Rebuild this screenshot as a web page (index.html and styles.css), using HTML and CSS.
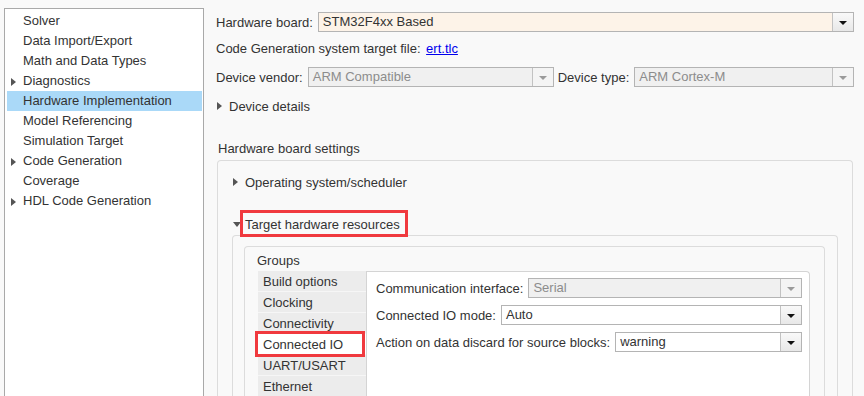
FILE: index.html
```html
<!DOCTYPE html>
<html lang="en">
<head>
    <meta charset="UTF-8">
    <meta name="viewport" content="width=device-width, initial-scale=1.0">
    <link rel="stylesheet" href="styles.css">
    <title>Configuration Parameters</title>
</head>
<body>
    <div class="main-container">

        <div class="nav">
            <ul class="nav-list">
                <li>Solver</li>
                <li>Data Import/Export</li>
                <li>Math and Data Types</li>
                <li class="collapsed">Diagnostics</li>
                <li class="active">Hardware Implementation</li>
                <li>Model Referencing</li>
                <li>Simulation Target</li>
                <li class="collapsed">Code Generation</li>
                <li>Coverage</li>
                <li class="collapsed">HDL Code Generation</li>
            </ul>
        </div>

        <div class="config">
            <div class="row">
                <span class="label">Hardware board:</span>
                <div class="select board">
                    <span class="value">STM32F4xx Based</span>
                    <span class="btn"></span>
                </div>
            </div>
            <div class="row row-gap-small">
                <span class="label">Code Generation system target file: <a href="#" class="link">ert.tlc</a></span>
            </div>
            <div class="row row-gap">
                <span class="label">Device vendor:</span>
                <div class="select disabled vendor">
                    <span class="value">ARM Compatible</span>
                    <span class="btn"></span>
                </div>
                <span class="label label-type">Device type:</span>
                <div class="select disabled">
                    <span class="value">ARM Cortex-M</span>
                    <span class="btn"></span>
                </div>
            </div>
            <div class="row row-gap toggle collapsed">Device details</div>

            <div class="section-title">Hardware board settings</div>
            <div class="panel board-settings">
                <div class="row toggle collapsed first-toggle">Operating system/scheduler</div>
                <div class="row toggle expanded second-toggle"><span class="marked">Target hardware resources</span></div>

                <div class="panel resources">
                    <div class="panel groups-box">
                        <div class="groups-title">Groups</div>
                        <div class="groups">
                            <ul class="group-list">
                                <li>Build options</li>
                                <li>Clocking</li>
                                <li>Connectivity</li>
                                <li class="selected"><span class="marked-item">Connected IO</span></li>
                                <li>UART/USART</li>
                                <li>Ethernet</li>
                            </ul>
                            <div class="group-pane">
                                <div class="pane-row">
                                    <span class="label">Communication interface:</span>
                                    <div class="select disabled">
                                        <span class="value">Serial</span>
                                        <span class="btn"></span>
                                    </div>
                                </div>
                                <div class="pane-row">
                                    <span class="label">Connected IO mode:</span>
                                    <div class="select white">
                                        <span class="value">Auto</span>
                                        <span class="btn"></span>
                                    </div>
                                </div>
                                <div class="pane-row">
                                    <span class="label">Action on data discard for source blocks:</span>
                                    <div class="select white">
                                        <span class="value">warning</span>
                                        <span class="btn"></span>
                                    </div>
                                </div>
                            </div>
                        </div>
                    </div>
                </div>
            </div>
        </div>

    </div>
</body>
</html>
```

FILE: styles.css
```css
*{
    margin:0px;
    padding:0px;
    box-sizing: border-box;
}
html, body{
    height: 100%;
    overflow: hidden;
}
body{
    background-color: #f9f9f9;
    font-family: "Liberation Sans", Arial, sans-serif;
    font-size: 13px;
    color: #333;
}
.main-container{
    display: flex;
    flex-direction: row;
    align-items: flex-start;
}

/* left tree */
.nav{
    width: 200px;
    height: 388px;
    margin-top: 8px;
    margin-left: 4px;
    border: 1px solid #a9a9a9;
    border-bottom: none;
    background-color: #fff;
    padding: 2px 1px 0 2px;
}
.nav-list{
    list-style: none;
}
.nav-list li{
    height: 20px;
    line-height: 20px;
    padding-left: 16px;
    white-space: nowrap;
}
.nav-list li.active{
    background-color: #aad9f8;
}
.nav-list li.collapsed::before{
    content: "";
    display: inline-block;
    margin-left: -12px;
    margin-right: 7px;
    border-top: 4px solid transparent;
    border-bottom: 4px solid transparent;
    border-left: 5px solid #555;
    vertical-align: -1px;
}

/* right side */
.config{
    flex: 1;
    margin-left: 12px;
    margin-right: 10px;
    padding-top: 12px;
}
.row{
    display: flex;
    align-items: center;
    height: 20px;
    white-space: nowrap;
}
.row-gap-small{
    margin-top: 6px;
}
.row-gap{
    margin-top: 9px;
}
.label{
    margin-right: 5px;
    white-space: nowrap;
}
.label-type{
    margin-left: 4px;
}
.link{
    color: #0000ee;
    text-decoration: underline;
    margin-left: 2px;
}

.select{
    flex: 1;
    display: flex;
    height: 20px;
    border: 1px solid #b4b4b4;
    background-color: #fff;
}
.select .value{
    flex: 1;
    line-height: 18px;
    padding-left: 4px;
    overflow: hidden;
}
.select .btn{
    width: 21px;
    border-left: 1px solid #c2c2c2;
    background: linear-gradient(#f9f9f9, #e8e8e8);
    display: flex;
    align-items: center;
    justify-content: center;
}
.select .btn::after{
    content: "";
    border-left: 4px solid transparent;
    border-right: 4px solid transparent;
    border-top: 4px solid #111;
    margin-top: 1px;
}
.select.board{
    background-color: #fdf3e8;
}
.select.disabled{
    background-color: #f0f0f0;
    color: #8c8c8c;
}
.select.disabled .btn{
    background: #f4f4f4;
}
.select.disabled .btn::after{
    border-top-color: #9a9a9a;
}
.select.vendor{
    flex: none;
    width: 246px;
}

.toggle::before{
    content: "";
    display: inline-block;
    margin-right: 7px;
}
.toggle.collapsed::before{
    border-top: 4px solid transparent;
    border-bottom: 4px solid transparent;
    border-left: 5px solid #555;
}
.toggle.expanded::before{
    border-left: 4px solid transparent;
    border-right: 4px solid transparent;
    border-top: 5px solid #555;
    margin-right: 4px;
    margin-top: 1px;
}
.config > .toggle{
    padding-left: 1px;
}

.section-title{
    margin-top: 23px;
    height: 20px;
    line-height: 20px;
    padding-left: 2px;
}

.panel{
    border: 1px solid #dcdcdc;
    border-bottom: none;
    border-radius: 4px 4px 0 0;
}
.board-settings{
    height: 236px;
    margin: 1px 1px 0 1px;
    padding-top: 11px;
}
.first-toggle{
    padding-left: 15px;
}
.second-toggle{
    margin-top: 22px;
    padding-left: 15px;
}
.marked{
    position: relative;
}
.marked::after{
    content: "";
    position: absolute;
    left: -5px;
    right: -8px;
    top: -7px;
    bottom: -5px;
    border: 3px solid #f0393e;
}

.resources{
    height: 161px;
    margin: 1px 14px 0 14px;
    padding: 10px 12px 0 11px;
}
.groups-box{
    height: 150px;
    background-color: #f9f9f9;
}
.groups-title{
    padding-top: 4px;
    padding-left: 12px;
    height: 24px;
    line-height: 20px;
}
.groups{
    display: flex;
    height: 125px;
    margin-left: 13px;
    margin-right: 14px;
}
.group-list{
    list-style: none;
    width: 108px;
}
.group-list li{
    height: 21px;
    line-height: 21px;
    padding-left: 5px;
    background-color: #ececec;
    border-bottom: 1px solid #f6f6f6;
}
.group-list li:last-child{
    height: 20px;
    border-bottom: none;
}
.group-list li.selected{
    background-color: #fff;
}
.marked-item{
    position: relative;
    display: block;
}
.marked-item::after{
    content: "";
    position: absolute;
    left: -8px;
    right: 1px;
    top: -3px;
    bottom: -2px;
    border: 3px solid #f0393e;
}
.group-pane{
    flex: 1;
    background-color: #fff;
    border: 1px solid #d4d4d4;
    border-bottom: none;
    border-top-right-radius: 4px;
    padding: 6px 7px 0 9px;
}
.pane-row{
    display: flex;
    align-items: center;
    height: 20px;
    margin-bottom: 7px;
}
```
